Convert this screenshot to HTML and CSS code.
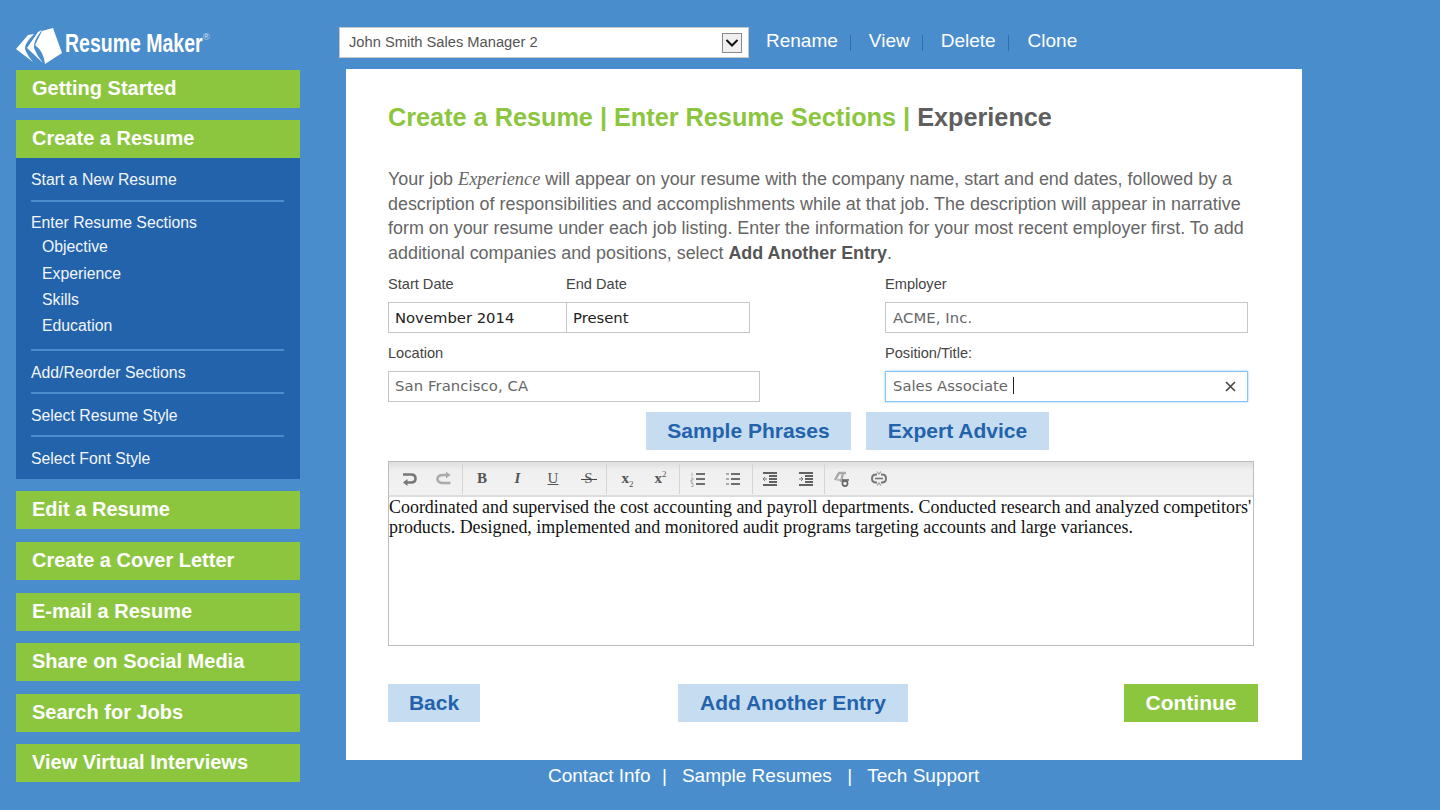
FILE: index.html
```html
<!DOCTYPE html>
<html lang="en">
<head>
<meta charset="utf-8">
<title>Resume Maker</title>
<link rel="stylesheet" href="styles.css">
</head>
<body>
<div class="page">
  <aside class="sidebar">
    <div class="logo">
      <svg class="logo-mark" width="48" height="38" viewBox="0 0 48 38">
        <path class="lm" d="M0 21 L12 7 L18 6 Q8 16 9 21 Q11 27 17 34 Z"/>
        <path class="lm" d="M11 20 L22 4 L26 2 Q17 13 18 20 Q21 28 27 35 Z"/>
        <path class="lm" d="M19 17 L26 3 L37 0 L46 25 L29 36 Q28 24 19 17 Z"/>
      </svg>
      <span class="logo-text">Resume Maker</span><span class="logo-reg">®</span>
    </div>
    <nav class="nav">
      <a class="nav-item">Getting Started</a>
      <div class="nav-group">
        <a class="nav-item">Create a Resume</a>
        <div class="sub">
          <div class="sub-sec sub-first">Start a New Resume</div>
          <div class="sub-sec sub-tree">
            <div class="sub-head">Enter Resume Sections</div>
            <div class="sub-child">Objective</div>
            <div class="sub-child">Experience</div>
            <div class="sub-child">Skills</div>
            <div class="sub-child">Education</div>
          </div>
          <div class="sub-sec">Add/Reorder Sections</div>
          <div class="sub-sec">Select Resume Style</div>
          <div class="sub-sec sub-last">Select Font Style</div>
        </div>
      </div>
      <a class="nav-item">Edit a Resume</a>
      <a class="nav-item">Create a Cover Letter</a>
      <a class="nav-item">E-mail a Resume</a>
      <a class="nav-item">Share on Social Media</a>
      <a class="nav-item">Search for Jobs</a>
      <a class="nav-item">View Virtual Interviews</a>
    </nav>
  </aside>
  <div class="content">
    <header class="topbar">
      <div class="select">
        <span class="select-text">John Smith Sales Manager 2</span>
        <span class="select-btn"><svg width="14" height="8" viewBox="0 0 14 8"><path d="M1.5 1 L7 6.5 L12.5 1" fill="none" stroke="#111" stroke-width="2"/></svg></span>
      </div>
      <div class="actions">
        <a>Rename</a><i></i><a>View</a><i></i><a>Delete</a><i class="last-sep"></i><a>Clone</a>
      </div>
    </header>
    <main class="card">
      <h1 class="title">Create a Resume | Enter Resume Sections | <span>Experience</span></h1>
      <p class="intro">Your job <em>Experience</em> will appear on your resume with the company name, start and end dates, followed by a<br>description of responsibilities and accomplishments while at that job. The description will appear in narrative<br>form on your resume under each job listing. Enter the information for your most recent employer first. To add<br>additional companies and positions, select <b>Add Another Entry</b>.</p>
      <div class="form-row">
        <div class="col-left">
          <div class="dates">
            <div class="field f-start"><label>Start Date</label><div class="input dark first">November 2014</div></div>
            <div class="field f-end"><label>End Date</label><div class="input dark last">Present</div></div>
          </div>
        </div>
        <div class="field f-emp"><label>Employer</label><div class="input">ACME, Inc.</div></div>
      </div>
      <div class="form-row row2">
        <div class="field f-loc"><label>Location</label><div class="input">San Francisco, CA</div></div>
        <div class="field f-emp"><label>Position/Title:</label>
          <div class="input focus"><span>Sales Associate&nbsp;</span><span class="caret"></span>
            <svg class="clear" width="11" height="11" viewBox="0 0 11 11"><path d="M1 1 L10 10 M10 1 L1 10" stroke="#444" stroke-width="1.6"/></svg>
          </div>
        </div>
      </div>
      <div class="advice">
        <a class="btn btn-light">Sample Phrases</a>
        <a class="btn btn-light">Expert Advice</a>
      </div>
      <div class="editor">
        <div class="toolbar">
          <div class="tb-group g1">
            <svg class="ic" viewBox="0 0 16 16"><path d="M2 3.5 H10 Q14.5 3.5 14.5 7.5 Q14.5 11.5 10 11.5 H5" fill="none" stroke="#777" stroke-width="2.6"/><path d="M6.5 8 L2 11.5 L6.5 15 Z" fill="#777"/></svg>
            <svg class="ic" viewBox="0 0 16 16"><path d="M14.5 12 H7 Q1.5 12 1.5 8 Q1.5 4 7 4 H11" fill="none" stroke="#aaa" stroke-width="2.6"/><path d="M10 0.5 L14.5 4 L10 7.5 Z" fill="#aaa"/></svg>
          </div>
          <div class="tb-group g2">
            <span class="g b">B</span><span class="g it">I</span><span class="g u">U</span><span class="g s">S</span>
          </div>
          <div class="tb-group g3">
            <span class="g b">x<sub>2</sub></span><span class="g b">x<sup>2</sup></span>
          </div>
          <div class="tb-group g4">
            <svg class="ic" viewBox="0 0 16 16"><path d="M6 3 H15 M6 8 H15 M6 13 H15" stroke="#444" stroke-width="1.5"/><path d="M2 1.5 V5 M1 7 H3 V9 H1 V11 H3 M1 12.5 H3 V15.5 H1" stroke="#aaa" fill="none"/></svg>
            <svg class="ic" viewBox="0 0 16 16"><path d="M6 3 H15 M6 8 H15 M6 13 H15" stroke="#444" stroke-width="1.5"/><path d="M1 3 H4 M1 8 H4 M1 13 H4" stroke="#aaa" stroke-width="2"/></svg>
          </div>
          <div class="tb-group g5">
            <svg class="ic" viewBox="0 0 16 16"><path d="M1 2 H15 M7 5 H15 M7 8 H15 M7 11 H15 M1 14 H15" stroke="#333" stroke-width="1.5"/><path d="M5 8 H1 M3 6 L1 8 L3 10" stroke="#777" fill="none"/></svg>
            <svg class="ic" viewBox="0 0 16 16"><path d="M1 2 H15 M7 5 H15 M7 8 H15 M7 11 H15 M1 14 H15" stroke="#333" stroke-width="1.5"/><path d="M1 8 H5 M3 6 L5 8 L3 10" stroke="#777" fill="none"/></svg>
          </div>
          <div class="tb-group g6">
            <svg class="ic" viewBox="0 0 16 16"><path d="M1 9 L5 2 H12 M9 2 L7 11" stroke="#aaa" stroke-width="2.4" fill="none"/><path d="M3 9 H9" stroke="#aaa" stroke-width="1.5"/><circle cx="11" cy="12.5" r="2.6" fill="none" stroke="#666" stroke-width="1.6"/><path d="M8 9 H15" stroke="#666" stroke-width="1.6"/></svg>
            <svg class="ic" viewBox="0 0 16 16"><path d="M6 3.5 H5 Q1 3.5 1 7.5 Q1 11.5 5 11.5 H6 M10 3.5 H11 Q15 3.5 15 7.5 Q15 11.5 11 11.5 H10" fill="none" stroke="#777" stroke-width="2"/><path d="M4 7.5 H12" stroke="#777" stroke-width="1.6"/><path d="M6 0.5 L8 3 L10 0.5 M6 14.5 L8 12 L10 14.5" stroke="#999" stroke-width="1.2" fill="none"/></svg>
          </div>
        </div>
        <div class="editor-body">Coordinated and supervised the cost accounting and payroll departments. Conducted research and analyzed competitors' products. Designed, implemented and monitored audit programs targeting accounts and large variances.</div>
      </div>
      <div class="bottom">
        <a class="btn btn-light b-back">Back</a>
        <a class="btn btn-light b-add">Add Another Entry</a>
        <a class="btn btn-green">Continue</a>
      </div>
    </main>
    <footer class="footer">
      <a>Contact Info</a><span class="sep">|</span><a>Sample Resumes</a><span class="sep sep-b">|</span><a>Tech Support</a>
    </footer>
  </div>
</div>
</body>
</html>
```
FILE: styles.css
```css
* { box-sizing: border-box; }
html, body { margin: 0; height: 100%; }
body { background: #4a8dcd; font-family: "Liberation Sans", Arial, sans-serif; overflow: hidden; }
.page { display: flex; width: 1440px; height: 810px; }

.sidebar { width: 284px; margin-left: 16px; flex: none; }
.logo { height: 69.8px; padding-top: 28px; display: flex; align-items: flex-start; color: #fff; }
.logo-mark { flex: none; }
.lm { fill: #fff; }
.logo-text { display: block; width: 139px; flex: none; font-weight: 700; font-size: 25px; line-height: 30px; margin-left: 1px; white-space: nowrap; transform: scaleX(0.78); transform-origin: left center; }
.logo-reg { font-size: 9px; line-height: 12px; margin: 3px 0 0 -1px; color: #cfe0f2; }

.nav { display: flex; flex-direction: column; gap: 12.6px; }
.nav-item { display: block; height: 38px; line-height: 37px; padding-left: 16px; background: #8cc63f; color: #fff; font-size: 20px; font-weight: 700; white-space: nowrap; }
.sub { background: #2363ab; height: 320.4px; padding: 0 16px 0 15px; color: #f2f6fb; font-size: 15.8px; }
.sub-sec { height: 43.3px; line-height: 44px; border-bottom: 2px solid #4a8dcd; }
.sub-first { line-height: 43px; }
.sub-tree { height: 149px; padding-top: 9px; line-height: 26.2px; }
.sub-head { height: 23.5px; line-height: 24px; }
.sub-child { padding-left: 11px; height: 26.4px; }
.sub-last { border-bottom: 0; }

.content { margin-left: 39px; flex: none; width: 963px; display: flex; flex-direction: column; }
.topbar { height: 69px; padding-top: 27px; display: flex; align-items: flex-start; }
.select { width: 410px; height: 31px; background: #fff; border: 1px solid #c6c6c6; display: flex; align-items: center; justify-content: space-between; padding: 0 6px 0 9px; font-size: 14.7px; color: #555; }
.select-text { margin-bottom: 2px; }
.select-btn { width: 20px; height: 20px; border: 1px solid #8a8a8a; background: #f0f0f0; display: flex; align-items: center; justify-content: center; }
.actions { display: flex; align-items: center; color: #fff; font-size: 19px; height: 28px; margin-left: 17px; }
.actions i { display: block; width: 1px; height: 16px; background: #2d6fb5; margin: 3px 18px 0 12px; }
.actions .last-sep { margin-right: 19px; }

.card { width: 956px; height: 691px; margin-left: 7px; background: #fff; padding: 33px 0 0 42px; }
.title { margin: 0; font-size: 25.25px; line-height: 31px; font-weight: 700; color: #8cc63f; white-space: nowrap; }
.title span { color: #5f5f5f; }
.intro { margin: 34px 0 0; font-size: 17.92px; line-height: 24.6px; color: #666; white-space: nowrap; }
.intro em { font-family: "Liberation Serif", serif; font-size: 18.3px; }
.intro b { color: #555; }

.form-row { display: flex; margin-top: 9px; }
.row2 { margin-top: 10px; }
.col-left { width: 497px; flex: none; }
.dates { display: flex; }
.field label { display: block; font-size: 14.6px; line-height: 20px; color: #444; height: 28px; }
.f-start { width: 178px; }
.f-end { width: 184px; }
.f-emp { width: 363px; }
.f-loc { width: 497px; padding-right: 125px; }
.input { height: 31px; border: 1px solid #c6c6c6; padding: 0 6px; font-family: "DejaVu Sans", Verdana, sans-serif; font-size: 14.8px; letter-spacing: 0.1px; line-height: 29px; color: #666; background: #fff; position: relative; white-space: nowrap; display: flex; align-items: center; }
.row2 .input { padding-bottom: 2px; }
.f-emp .input { padding-left: 7px; }
.input.dark { color: #222; letter-spacing: 0; }
.input.first { border-right: 0; }
.input.focus { border: 1px solid #86c5f7; box-shadow: 0 0 2px #86c5f7; letter-spacing: 0; }
.caret { display: inline-block; width: 1px; height: 17px; background: #222; }
.clear { position: absolute; right: 11px; top: 9px; }

.btn { display: inline-block; height: 38px; line-height: 37px; text-align: center; font-size: 21px; font-weight: 700; white-space: nowrap; }
.btn-light { background: #c6dcf1; color: #2363ab; }
.btn-green { background: #8cc63f; color: #fff; width: 134px; }
.advice { display: flex; justify-content: flex-start; gap: 15px; margin-top: 10px; padding-left: 258px; }
.advice .btn:first-child { width: 205px; }
.advice .btn:last-child { width: 183px; }

.editor { width: 866px; height: 185px; margin-top: 11px; border: 1px solid #bdbdbd; }
.toolbar { height: 35px; border-bottom: 2px solid #ddd; background: linear-gradient(#dedede, #efefef 25%, #f2f2f2); display: flex; align-items: center; }
.tb-group { display: flex; align-items: center; height: 30px; border-right: 1px solid #d5d5d5; flex: none; }
.tb-group:last-child { border-right: 0; }
.g1 { padding: 0 10px 0 12px; gap: 19px; }
.g2 { padding: 0 9px 0 11px; gap: 19.5px; }
.g3 { padding: 0 10px 0 13px; gap: 17px; }
.g4 { padding: 0 11px 0 10px; gap: 19px; }
.g5 { padding: 0 10px 0 9px; gap: 20px; }
.g6 { padding: 0 0 0 9px; gap: 21px; }
.ic { width: 16px; height: 16px; flex: none; }
.g { width: 16px; text-align: center; font-family: "Liberation Serif", serif; font-size: 15px; color: #555; flex: none; position: relative; }
.g.b { font-weight: 700; }
.g.it { font-style: italic; font-weight: 700; }
.g.u { text-decoration: underline; }
.g.s::after { content: ""; position: absolute; left: 0; right: 0; top: 9px; height: 1px; background: #444; }
.g sub, .g sup { font-size: 9px; font-weight: 400; line-height: 0; }
.editor-body { padding: 0; font-family: "Liberation Serif", serif; font-size: 17.93px; line-height: 20px; color: #111; width: 864px; }

.bottom { display: flex; align-items: flex-start; margin-top: 38px; width: 870px; justify-content: space-between; }
.b-back { width: 92px; }
.b-add { width: 230px; margin-right: 18px; }
.footer { display: flex; color: #fff; font-size: 19px; height: 30px; padding: 5px 0 0 209px; white-space: nowrap; }
.sep { margin: 0 15px 0 11.5px; }
.sep-b { margin-left: 15.5px; }
```
